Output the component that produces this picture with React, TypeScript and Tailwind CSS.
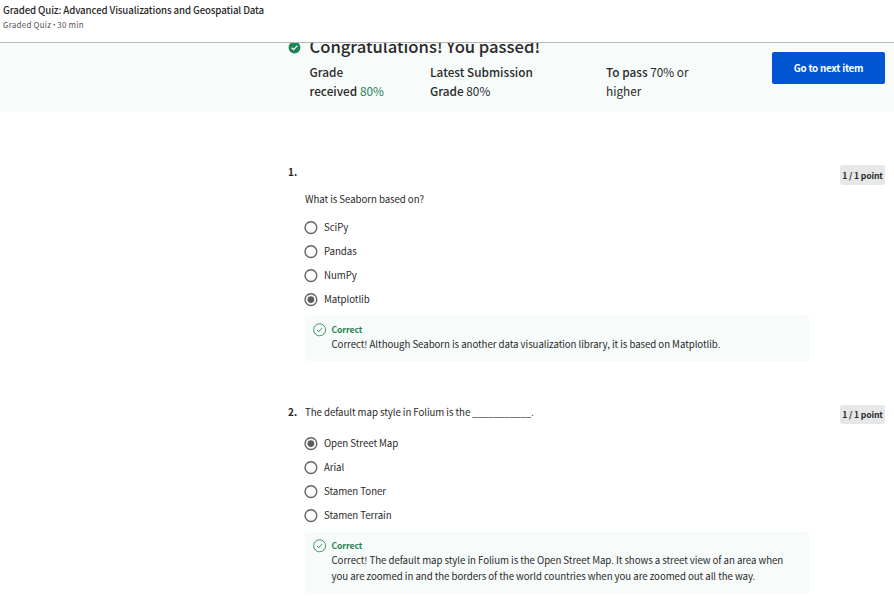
import React from "react";

type Question = {
  number: string;
  prompt: string;
  options: string[];
  selected: number;
  feedback: string[];
};

const first: Question = {
  number: "1.",
  prompt: "What is Seaborn based on?",
  options: ["SciPy", "Pandas", "NumPy", "Matplotlib"],
  selected: 3,
  feedback: ["Correct! Although Seaborn is another data visualization library, it is based on Matplotlib."],
};

const second: Question = {
  number: "2.",
  prompt: "The default map style in Folium is the ___________.",
  options: ["Open Street Map", "Arial", "Stamen Toner", "Stamen Terrain"],
  selected: 0,
  feedback: [
    "Correct! The default map style in Folium is the Open Street Map. It shows a street view of an area when",
    "you are zoomed in and the borders of the world countries when you are zoomed out all the way.",
  ],
};

function Radio({ checked }: { checked: boolean }) {
  return (
    <svg width="14" height="14" viewBox="0 0 14 14" className="shrink-0">
      <circle cx="6.9" cy="6.6" r="5.9" fill="none" stroke="#666" strokeWidth="1.4" />
      {checked && <circle cx="6.9" cy="6.6" r="3.4" fill="#5c5c5c" />}
    </svg>
  );
}

function Options({ question }: { question: Question }) {
  return (
    <ul>
      {question.options.map((option, i) => (
        <li key={option} className="flex h-6 items-center gap-[6px]">
          <Radio checked={i === question.selected} />
          <span className="-mt-[2px] text-[9.7px] leading-4 tracking-[-0.07px]">{option}</span>
        </li>
      ))}
    </ul>
  );
}

function Feedback({ lines, className }: { lines: string[]; className: string }) {
  return (
    <div className={`flex w-[504px] gap-[4.5px] bg-[#f7fbfa] pl-2 ${className}`}>
      <svg width="14" height="14" viewBox="0 0 14 14" className="mt-px shrink-0" fill="none" stroke="#2b8a5b">
        <circle cx="6.6" cy="6.8" r="6" strokeWidth="0.9" />
        <path d="M4 7 5.8 8.8 9.2 5" strokeWidth="0.9" />
      </svg>
      <div className="whitespace-nowrap">
        <p className="text-[8.6px] leading-[14px] font-bold tracking-[-0.1px] text-[#1f8354]">Correct</p>
        {lines.map((line) => (
          <p key={line} className="text-[9.7px] leading-4 tracking-[-0.065px]">{line}</p>
        ))}
      </div>
    </div>
  );
}

function Points({ className }: { className: string }) {
  return (
    <span className={`flex w-[45px] items-center justify-center rounded-[3px] bg-[#e5e7e8] text-[8.6px] leading-4 font-bold tracking-[-0.13px] whitespace-nowrap ${className}`}>
      1 / 1 point
    </span>
  );
}

export default function App() {
  return (
    <div className="h-[596px] w-[894px] overflow-hidden bg-white font-['Noto_Sans_CJK_SC',sans-serif] text-[#2a2a2a]">
      <header className="h-[43px] border-b border-[#b5b5b5] pt-[2px] pl-[3px] whitespace-nowrap">
        <h1 className="text-[9.7px] leading-4 font-medium tracking-[-0.12px]">Graded Quiz: Advanced Visualizations and Geospatial Data</h1>
        <p className="flex items-center text-[8px] leading-[13px] tracking-[0.22px] text-[#555]">
          <span>Graded Quiz</span>
          <span className="mx-[2px] w-[2px] overflow-visible"><span className="-ml-[3px]">•</span></span>
          <span>30 min</span>
        </p>
      </header>

      <section className="flex h-[69px] overflow-hidden bg-[#f7fbfa] pl-[288px]">
        <svg width="13" height="13" viewBox="0 0 13 13" className="-mt-[2px] shrink-0">
          <circle cx="6.5" cy="6.5" r="5.9" fill="#1f8354" />
          <path d="M3.7 6.7 5.6 8.6 9.4 4.6" fill="none" stroke="white" strokeWidth="1.3" />
        </svg>
        <div className="ml-[8.5px] w-[462.5px] shrink-0 whitespace-nowrap">
          <h2 className="-mt-[9px] text-[16.6px] leading-[24px] font-medium">Congratulations! You passed!</h2>
          <div className="mt-[4px] flex text-[11.8px] leading-[19px]">
            <p className="w-[120.5px] font-medium">Grade<br />received <span className="font-normal text-[#1f8354]">80%</span></p>
            <p className="w-[176px] font-medium">Latest Submission<br />Grade <span className="font-normal">80%</span></p>
            <p><span className="font-medium">To pass</span> 70% or<br />higher</p>
          </div>
        </div>
        <button className="mt-[9px] flex h-8 w-[113px] items-center justify-center rounded-[2px] bg-[#0056d2] pb-px text-[9.8px] leading-4 font-bold tracking-[-0.24px] whitespace-nowrap text-white">
          Go to next item
        </button>
      </section>

      <main className="pl-[288px]">
        <article className="flex pt-[53px]">
          <span className="-mt-px w-[17px] text-[10px] leading-4 font-bold">{first.number}</span>
          <div className="w-[535px]">
            <p className="mt-[26px] mb-[9px] text-[9.7px] leading-[17px] tracking-[-0.07px] whitespace-nowrap">{first.prompt}</p>
            <div className="-mt-px -ml-px"><Options question={first} /></div>
            <Feedback lines={first.feedback} className="mt-[3px] h-[46px] pt-[7px]" />
          </div>
          <Points className="h-5 pb-px" />
        </article>
        <article className="flex pt-[44px]">
          <span className="-mt-px w-[17px] text-[10px] leading-4 font-bold">{second.number}</span>
          <div className="w-[535px]">
            <p className="-mt-px text-[9.7px] leading-4 tracking-[-0.07px] whitespace-nowrap">{second.prompt}</p>
            <div className="mt-[12px] -ml-px"><Options question={second} /></div>
            <Feedback lines={second.feedback} className="mt-[4px] h-[61px] pt-[6px]" />
          </div>
          <Points className="h-[19px] pb-[2px]" />
        </article>
      </main>
    </div>
  );
}
